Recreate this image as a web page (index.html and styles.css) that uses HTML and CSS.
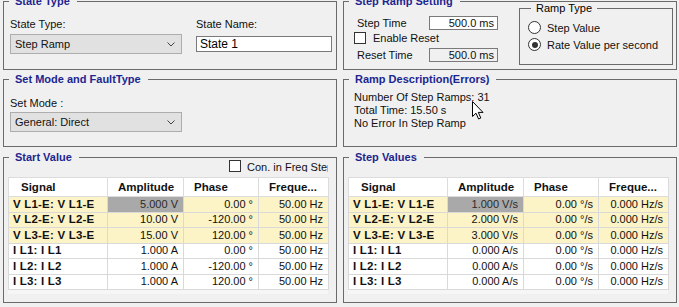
FILE: index.html
```html
<!DOCTYPE html>
<html lang="en">
<head>
    <meta charset="UTF-8">
    <title>State Editor - Step Ramp</title>
    <link rel="stylesheet" href="styles.css">
</head>
<body>
    <div class="page">
        <div class="row row-top">
            <fieldset class="group state-group">
                <legend>State Type</legend>
                <div class="state-fields">
                    <div class="field field-type">
                        <label>State Type:</label>
                        <div class="combo">
                            <span>Step Ramp</span>
                            <svg width="8" height="5" viewBox="0 0 8 5"><path d="M0.5 0.5 L4 4 L7.5 0.5" fill="none" stroke="#444" stroke-width="1"/></svg>
                        </div>
                    </div>
                    <div class="field field-name">
                        <label for="state-name">State Name:</label>
                        <input type="text" id="state-name" class="textbox" value="State 1">
                    </div>
                </div>
            </fieldset>

            <fieldset class="group ramp-group">
                <legend>Step Ramp Setting</legend>
                <div class="ramp-body">
                    <div class="ramp-times">
                        <div class="time-row">
                            <span class="time-label">Step Time</span>
                            <div class="numbox">500.0 ms</div>
                        </div>
                        <div class="check-row">
                            <span class="checkbox"></span>
                            <span>Enable Reset</span>
                        </div>
                        <div class="time-row">
                            <span class="time-label">Reset Time</span>
                            <div class="numbox readonly">500.0 ms</div>
                        </div>
                    </div>
                    <fieldset class="subgroup">
                        <legend>Ramp Type</legend>
                        <div class="radio-row">
                            <span class="radio"></span>
                            <span>Step Value</span>
                        </div>
                        <div class="radio-row">
                            <span class="radio checked"></span>
                            <span>Rate Value per second</span>
                        </div>
                    </fieldset>
                </div>
            </fieldset>
        </div>

        <div class="row row-mid">
            <fieldset class="group mode-group">
                <legend>Set Mode and FaultType</legend>
                <div class="mode-body">
                    <label>Set Mode :</label>
                    <div class="combo">
                        <span>General: Direct</span>
                        <svg width="8" height="5" viewBox="0 0 8 5"><path d="M0.5 0.5 L4 4 L7.5 0.5" fill="none" stroke="#444" stroke-width="1"/></svg>
                    </div>
                </div>
            </fieldset>

            <fieldset class="group desc-group">
                <legend>Ramp Description(Errors)</legend>
                <div class="desc-body">
                    <p>Number Of Step Ramps: 31</p>
                    <p>Total Time: 15.50 s</p>
                    <p>No Error In Step Ramp</p>
                </div>
            </fieldset>
        </div>

        <div class="row row-bottom">
            <fieldset class="group values-group">
                <legend>Start Value</legend>
                <div class="grid-tools">
                    <span class="checkbox"></span>
                    <span class="tools-label">Con. in Freq Step</span>
                </div>
                <div class="grid-wrap">
                    <table class="grid">
                        <colgroup>
                            <col class="c-signal"><col class="c-amp"><col class="c-phase"><col class="c-freq">
                        </colgroup>
                        <thead>
                            <tr><th>Signal</th><th>Amplitude</th><th>Phase</th><th>Freque...</th></tr>
                        </thead>
                        <tbody>
                            <tr class="volt"><td>V L1-E: V L1-E</td><td class="selected">5.000 V</td><td>0.00 °</td><td>50.00 Hz</td></tr>
                            <tr class="volt"><td>V L2-E: V L2-E</td><td>10.00 V</td><td>-120.00 °</td><td>50.00 Hz</td></tr>
                            <tr class="volt"><td>V L3-E: V L3-E</td><td>15.00 V</td><td>120.00 °</td><td>50.00 Hz</td></tr>
                            <tr><td>I L1: I L1</td><td>1.000 A</td><td>0.00 °</td><td>50.00 Hz</td></tr>
                            <tr><td>I L2: I L2</td><td>1.000 A</td><td>-120.00 °</td><td>50.00 Hz</td></tr>
                            <tr><td>I L3: I L3</td><td>1.000 A</td><td>120.00 °</td><td>50.00 Hz</td></tr>
                        </tbody>
                    </table>
                    <div class="grid-fill"></div>
                </div>
            </fieldset>

            <fieldset class="group values-group">
                <legend>Step Values</legend>
                <div class="grid-wrap no-tools">
                    <table class="grid">
                        <colgroup>
                            <col class="c-signal"><col class="c-amp"><col class="c-phase"><col class="c-freq">
                        </colgroup>
                        <thead>
                            <tr><th>Signal</th><th>Amplitude</th><th>Phase</th><th>Freque...</th></tr>
                        </thead>
                        <tbody>
                            <tr class="volt"><td>V L1-E: V L1-E</td><td class="selected">1.000 V/s</td><td>0.00 °/s</td><td>0.000 Hz/s</td></tr>
                            <tr class="volt"><td>V L2-E: V L2-E</td><td>2.000 V/s</td><td>0.00 °/s</td><td>0.000 Hz/s</td></tr>
                            <tr class="volt"><td>V L3-E: V L3-E</td><td>3.000 V/s</td><td>0.00 °/s</td><td>0.000 Hz/s</td></tr>
                            <tr><td>I L1: I L1</td><td>0.000 A/s</td><td>0.00 °/s</td><td>0.000 Hz/s</td></tr>
                            <tr><td>I L2: I L2</td><td>0.000 A/s</td><td>0.00 °/s</td><td>0.000 Hz/s</td></tr>
                            <tr><td>I L3: I L3</td><td>0.000 A/s</td><td>0.00 °/s</td><td>0.000 Hz/s</td></tr>
                        </tbody>
                    </table>
                    <div class="grid-fill"></div>
                </div>
            </fieldset>
        </div>

        <svg class="cursor" width="13" height="19" viewBox="0 0 13 19">
            <path d="M0.5 0.5 L0.5 15.5 L4 12.2 L6.6 18 L8.8 17 L6.3 11.4 L11 11.4 Z" fill="#fff" stroke="#000" stroke-width="1" stroke-linejoin="round"/>
        </svg>
    </div>
</body>
</html>
```

FILE: styles.css
```css
body {
    margin: 0;
    background-color: #f0f0f0;
    font-family: "Liberation Sans", Arial, sans-serif;
    font-size: 11px;
    color: #111;
    overflow: hidden;
}
.page {
    position: relative;
    width: 674px;
    margin-top: -5px;
    padding-left: 3px;
}
.row {
    display: grid;
    grid-template-columns: 334px 334px;
    column-gap: 6px;
}
.row-mid {
    margin-top: 3px;
}
.row-bottom {
    margin-top: 4px;
}
.group {
    margin: 0;
    padding: 0;
    border: 1px solid #6a6a6a;
    min-width: 0;
    box-sizing: border-box;
}
.group > legend {
    margin-left: 5px;
    padding: 0 7px 0 6px;
    font-weight: bold;
    line-height: 13px;
    color: #1c2690;
}
.row-top .group {
    height: 75px;
}
.row-mid .group {
    height: 74px;
}
.row-bottom .group {
    height: 152px;
}

/* state type */
.state-fields {
    display: flex;
    padding: 10px 0 0 6px;
}
.field label {
    display: block;
    line-height: 13px;
}
.field-type {
    width: 172px;
}
.field-name {
    margin-left: 14px;
}
.combo {
    display: flex;
    justify-content: space-between;
    align-items: center;
    height: 20px;
    margin-top: 3px;
    padding: 0 6px 0 4px;
    background: #e1e1e1;
    border: 1px solid #adadad;
    box-sizing: border-box;
}
.textbox {
    display: block;
    width: 136px;
    height: 16px;
    margin-top: 5px;
    padding: 0 3px;
    border: 1px solid #7a7a7a;
    background: #fff;
    font: inherit;
    font-size: 12px;
    color: #000;
    box-sizing: border-box;
}

/* step ramp */
.ramp-body {
    display: flex;
    justify-content: space-between;
    padding-right: 3px;
}
.ramp-times {
    padding: 8px 0 0 10px;
}
.time-row {
    display: flex;
    align-items: center;
    height: 14px;
}
.time-label {
    width: 72px;
    padding-left: 3px;
}
.numbox {
    width: 69px;
    height: 14px;
    padding-right: 3px;
    border: 1px solid #7a7a7a;
    background: #fff;
    text-align: right;
    line-height: 12px;
    box-sizing: border-box;
}
.numbox.readonly {
    background: #f0f0f0;
}
.check-row {
    display: flex;
    align-items: center;
    gap: 7px;
    height: 12px;
    margin: 2px 0 4px;
}
.checkbox {
    width: 12px;
    height: 12px;
    border: 1px solid #333;
    background: #fff;
    box-sizing: border-box;
    flex-shrink: 0;
}
.subgroup {
    width: 154px;
    height: 63px;
    margin: -6px 0 0;
    padding: 4px 0 0 8px;
    border: 1px solid #6a6a6a;
    box-sizing: border-box;
}
.subgroup legend {
    margin-left: 3px;
    padding: 0 5px;
    line-height: 13px;
    color: #000;
}
.radio-row {
    display: flex;
    align-items: center;
    gap: 6px;
    height: 17px;
}
.radio {
    position: relative;
    width: 13px;
    height: 13px;
    border: 1px solid #333;
    border-radius: 50%;
    background: #fff;
    box-sizing: border-box;
}
.radio.checked::after {
    content: "";
    position: absolute;
    left: 2.5px;
    top: 2.5px;
    width: 6px;
    height: 6px;
    border-radius: 50%;
    background: #333;
}

/* set mode */
.mode-body {
    width: 172px;
    padding: 11px 0 0 6px;
}
.mode-body label {
    display: block;
    line-height: 13px;
}
.mode-body .combo {
    margin-top: 2px;
}

/* description */
.desc-body {
    padding: 5px 0 0 10px;
}
.desc-body p {
    margin: 0;
    line-height: 13px;
}
.cursor {
    position: absolute;
    left: 472px;
    top: 106px;
}

/* value grids */
.grid-tools {
    display: flex;
    align-items: center;
    justify-content: flex-end;
    height: 12px;
    margin: -4px 8px 0 0;
}
.tools-label {
    width: 81px;
    height: 12px;
    margin-left: 6px;
    overflow: hidden;
    white-space: nowrap;
    line-height: 14px;
}
.grid-wrap {
    width: 320px;
    margin: 5px 0 0 4px;
}
.grid-wrap.no-tools {
    margin-top: 13px;
}
.grid {
    width: 320px;
    border-collapse: collapse;
    table-layout: fixed;
}
.c-signal { width: 99px; }
.c-amp { width: 76px; }
.c-phase { width: 75px; }
.c-freq { width: 70px; }
.grid th {
    height: 18px;
    padding: 0 0 0 10px;
    background: #fff;
    border: 1px solid #dcdcdc;
    text-align: left;
    font-size: 11.5px;
    font-weight: bold;
}
.grid th:first-child {
    padding-left: 12px;
}
.grid td {
    height: 14.5px;
    padding: 0 5px 0 0;
    background: #fff;
    border: 1px solid #d9d9d9;
    text-align: right;
    line-height: 13px;
    white-space: nowrap;
    overflow: hidden;
}
.grid td:first-child {
    padding-left: 4px;
    text-align: left;
    font-size: 11.5px;
    font-weight: bold;
    letter-spacing: 0.2px;
}
.grid tr.volt td {
    background: #fcf3c6;
}
.grid tr.volt td.selected {
    background: #a9a9a9;
    color: #2a2a2a;
}
.grid-fill {
    height: 4px;
    background: #f6f6f6;
}
```
